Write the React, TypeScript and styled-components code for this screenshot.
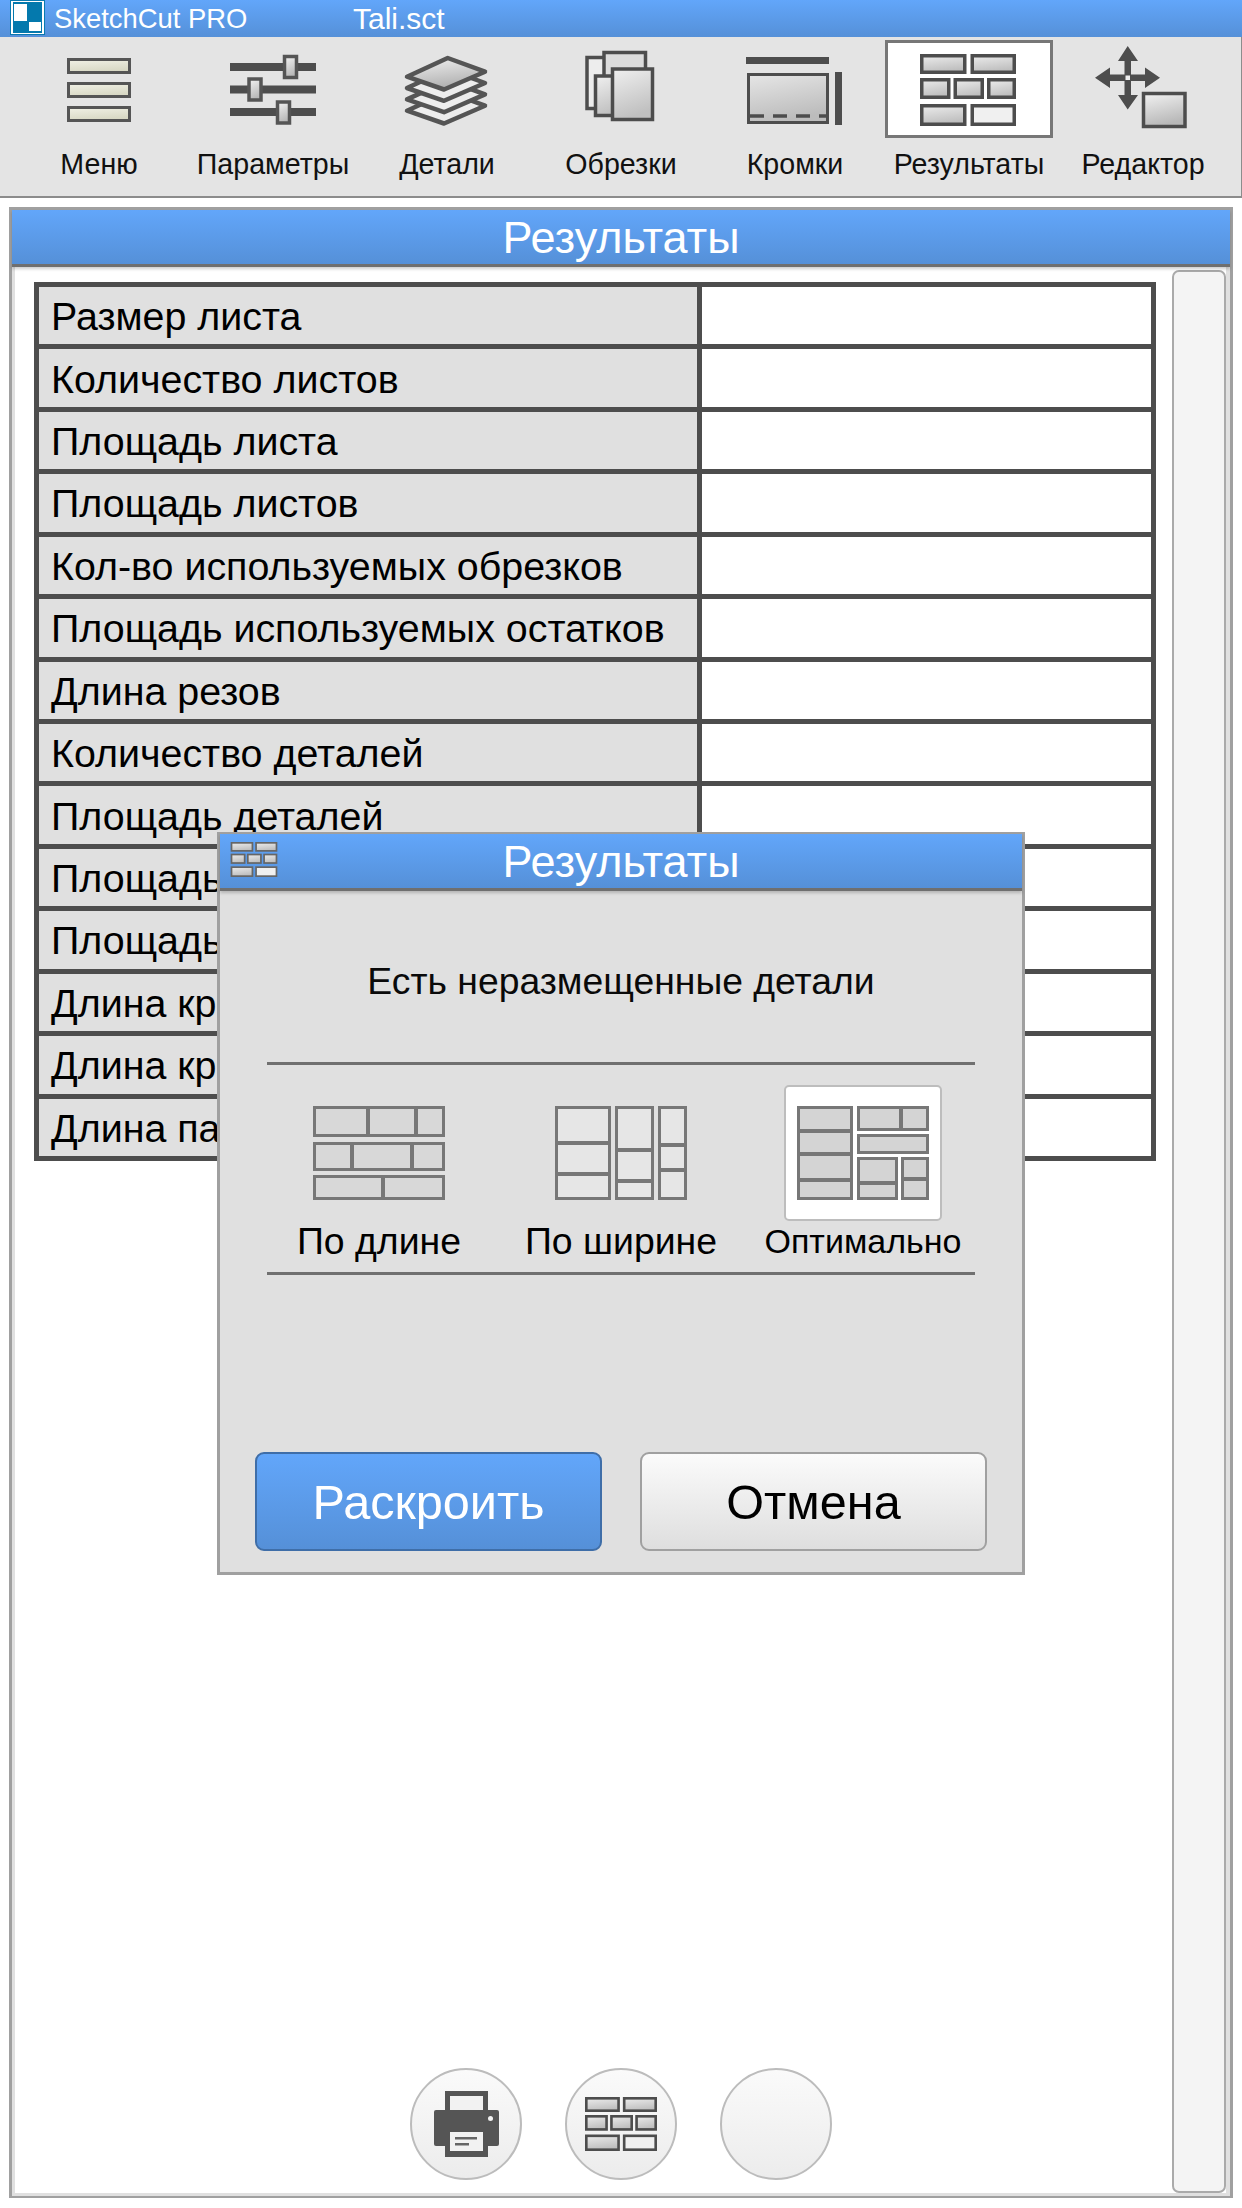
import * as React from 'react';
import styled, { createGlobalStyle } from 'styled-components';

const GlobalStyle = createGlobalStyle`
  html, body {
    margin: 0;
    padding: 0;
    background: #ffffff;
  }

  * {
    box-sizing: border-box;
  }
`;

const BLUE_BAR = 'linear-gradient(to bottom, #62a6fa 0%, #5590d8 100%)';

const Page = styled.div`
  position: relative;
  width: 1242px;
  height: 2208px;
  overflow: hidden;
  display: flex;
  flex-direction: column;
  background: #ffffff;
  font-family: 'Liberation Sans', Arial, sans-serif;
  color: #000000;
`;

const TitleBar = styled.div`
  height: 37px;
  flex: none;
  display: flex;
  align-items: center;
  background: ${BLUE_BAR};
  color: #ffffff;
  font-size: 27.4px;
`;

const Logo = styled.svg`
  width: 35px;
  height: 35px;
  margin: 0 9px 2px 10px;
  flex: none;
`;

const AppName = styled.span`
  width: 299px;
  flex: none;
`;

const FileName = styled.span`
  font-size: 30px;
`;

const Toolbar = styled.div`
  height: 161px;
  flex: none;
  display: grid;
  grid-template-columns: repeat(7, 174px);
  padding: 3px 12px 0;
  background: #e4e4e4;
  border-bottom: 2px solid #8c8c8c;
  border-right: 1px solid #8c8c8c;
`;

const ToolItem = styled.div`
  display: flex;
  flex-direction: column;
  align-items: center;
`;

const ToolIconBox = styled.div<{ $active?: boolean }>`
  width: 168px;
  height: 98px;
  background: ${(p) => (p.$active ? '#ffffff' : 'transparent')};
  outline: ${(p) => (p.$active ? '3px solid #777777' : 'none')};
  outline-offset: -3px;
`;

const ToolSvg = styled.svg`
  display: block;
  width: 168px;
  height: 98px;
`;

const ToolLabel = styled.div`
  margin-top: 11px;
  font-size: 28.6px;
  line-height: 30px;
  white-space: nowrap;
  color: #111111;
`;

const Panel = styled.div`
  flex: none;
  width: 1224px;
  height: 1991px;
  margin: 9px 0 0 9px;
  display: flex;
  flex-direction: column;
  border: 3px solid #a0a0a0;
  border-bottom-width: 2px;
`;

const BlueHeader = styled.div`
  position: relative;
  flex: none;
  height: 57px;
  display: flex;
  align-items: center;
  justify-content: center;
  padding-top: 2px;
  background: ${BLUE_BAR};
  border-bottom: 3px solid #6f6f6f;
  box-shadow: 0 2px 3px rgba(0, 0, 0, 0.2);
  color: #ffffff;
  font-size: 45px;
`;

const PanelBody = styled.div`
  flex: 1;
  min-height: 0;
  display: flex;
  gap: 16px;
  padding: 3px 0 0 19px;
  border-left: 3px solid #e0e0e0;
  border-right: 4px solid #e0e0e0;
  border-bottom: 3px solid #e0e0e0;
`;

const MainColumn = styled.div`
  width: 1122px;
  flex: none;
  display: flex;
  flex-direction: column;
  padding: 12px 0 13px;
`;

const ResultTable = styled.div`
  height: 879px;
  flex: none;
  display: grid;
  grid-template-rows: repeat(14, 1fr);
  grid-template-columns: 658px 449px;
  gap: 5px;
  padding: 5px;
  background: #4d4d4d;
`;

const LabelCell = styled.div`
  display: flex;
  align-items: center;
  padding: 2px 0 0 12px;
  background: #e0e0e0;
  font-size: 39.4px;
  white-space: nowrap;
  overflow: hidden;
`;

const ValueCell = styled.div`
  background: #ffffff;
`;

const BottomBar = styled.div`
  margin-top: auto;
  display: flex;
  gap: 43px;
  padding-left: 376px;
`;

const RoundButton = styled.div`
  width: 112px;
  height: 112px;
  display: flex;
  align-items: center;
  justify-content: center;
  border-radius: 50%;
  border: 2px solid #bcbcbc;
  background: linear-gradient(to bottom, #fafafa 0%, #ececec 100%);
`;

const Scrollbar = styled.div`
  width: 54px;
  flex: none;
  background: #f4f4f4;
  border: 2px solid #aaaaaa;
  border-radius: 7px;
`;

const Dialog = styled.div`
  position: absolute;
  left: 217px;
  top: 832px;
  width: 808px;
  height: 743px;
  display: flex;
  flex-direction: column;
  background: #e0e0e0;
  border: 3px solid #a0a0a0;
  border-top-width: 2px;
`;

const DialogIcon = styled.svg`
  position: absolute;
  left: 10px;
  top: 8px;
  width: 48px;
  height: 35px;
`;

const Message = styled.div`
  margin-top: 68px;
  height: 44px;
  line-height: 44px;
  text-align: center;
  font-size: 37.3px;
  color: #0a0a0a;
`;

const Divider = styled.div<{ $top: number }>`
  flex: none;
  height: 3px;
  margin: ${(p) => p.$top}px 47px 0;
  background: #707070;
`;

const Options = styled.div`
  display: grid;
  grid-template-columns: repeat(3, 242px);
  justify-content: center;
  padding-top: 20px;
`;

const Option = styled.div`
  display: flex;
  flex-direction: column;
  align-items: center;
`;

const OptionIconBox = styled.div<{ $active?: boolean }>`
  width: 158px;
  height: 136px;
  display: flex;
  align-items: center;
  justify-content: center;
  border-radius: 5px;
  background: ${(p) => (p.$active ? '#ffffff' : 'transparent')};
  border: 2px solid ${(p) => (p.$active ? '#bdbdbd' : 'transparent')};
`;

const OptionSvg = styled.svg`
  display: block;
  width: 132px;
  height: 94px;
`;

const OptionLabel = styled.div<{ $size: number }>`
  height: 40px;
  line-height: 40px;
  font-size: ${(p) => p.$size}px;
  white-space: nowrap;
`;

const Buttons = styled.div`
  margin-top: auto;
  display: flex;
  justify-content: center;
  gap: 38px;
  padding-bottom: 21px;
`;

const DialogButton = styled.div<{ $primary?: boolean }>`
  width: 347px;
  height: 99px;
  display: flex;
  align-items: center;
  justify-content: center;
  border-radius: 9px;
  font-size: 48.6px;
  color: ${(p) => (p.$primary ? '#ffffff' : '#000000')};
  background: ${(p) =>
    p.$primary ? BLUE_BAR : 'linear-gradient(to bottom, #fbfbfb 0%, #dedede 100%)'};
  border: 2px solid ${(p) => (p.$primary ? '#3f6ea8' : '#a0a0a0')};
`;

const ROWS = [
  'Размер листа',
  'Количество листов',
  'Площадь листа',
  'Площадь листов',
  'Кол-во используемых обрезков',
  'Площадь используемых остатков',
  'Длина резов',
  'Количество деталей',
  'Площадь деталей',
  'Площадь остатков',
  'Площадь отходов',
  'Длина кромки',
  'Длина кромки',
  'Длина пазов',
];

const DARK = '#4d4d4d';

const Shade = ({ id, from = '#f2f2f2', to = '#bdbdbd' }: { id: string; from?: string; to?: string }) => (
  <defs>
    <linearGradient id={id} x1="0" y1="0" x2="0.3" y2="1">
      <stop offset="0" stopColor={from} />
      <stop offset="1" stopColor={to} />
    </linearGradient>
  </defs>
);

const viewFor = (cx: number) => `${cx - 84} 40 168 98`;

const MenuIcon = () => (
  <ToolSvg viewBox={viewFor(99)}>
    <Shade id="menu" from="#f1f1e6" to="#d8d8c4" />
    {[59.5, 83.5, 107.5].map((y) => (
      <rect key={y} x="68.5" y={y} width="61" height="13" fill="url(#menu)" stroke="#555555" strokeWidth="3" />
    ))}
  </ToolSvg>
);

const Knob = ({ x, y }: { x: number; y: number }) => (
  <rect x={x} y={y} width="12" height="21" fill="url(#knob)" stroke="#555555" strokeWidth="3.5" />
);

const SlidersIcon = () => (
  <ToolSvg viewBox={viewFor(273)}>
    <Shade id="knob" from="#f4f4f4" to="#b8b8b8" />
    <rect x="230" y="63" width="86" height="8" fill={DARK} />
    <rect x="230" y="85.5" width="86" height="8" fill={DARK} />
    <rect x="230" y="108" width="86" height="8" fill={DARK} />
    <Knob x={284.5} y={56.5} />
    <Knob x={249} y={79} />
    <Knob x={277.5} y={102} />
  </ToolSvg>
);

const LAYER_SHAPE = (dy: number) =>
  `M447.7 ${58 + dy} L485 ${71.7 + dy} L444 ${89.5 + dy} L407 ${76.7 + dy} Z`;

const LayersIcon = () => (
  <ToolSvg viewBox={viewFor(447)}>
    <Shade id="layer" from="#f2f2f2" to="#b0b0b0" />
    {[34, 22.7, 11.3].map((dy) => (
      <path key={dy} d={LAYER_SHAPE(dy)} fill="#ededed" stroke="#555555" strokeWidth="4.5" strokeLinejoin="round" />
    ))}
    <path d={LAYER_SHAPE(0)} fill="url(#layer)" stroke="#555555" strokeWidth="4.5" strokeLinejoin="round" />
  </ToolSvg>
);

const OffcutsIcon = () => (
  <ToolSvg viewBox={viewFor(621)}>
    <Shade id="offcut" from="#f0f0f0" to="#c0c0c0" />
    <rect x="587" y="57.5" width="30" height="51" fill="#ededed" stroke={DARK} strokeWidth="3.5" />
    <rect x="604" y="52.5" width="41.5" height="40" fill="#dcdcdc" stroke={DARK} strokeWidth="3.5" />
    <rect x="595.5" y="76" width="30" height="39.5" fill="url(#offcut)" stroke={DARK} strokeWidth="3.5" />
    <rect x="612.5" y="69" width="40" height="50.5" fill="url(#offcut)" stroke={DARK} strokeWidth="3.5" />
  </ToolSvg>
);

const EdgesIcon = () => (
  <ToolSvg viewBox={viewFor(795)}>
    <Shade id="edge" from="#e6e6e6" to="#bcbcbc" />
    <rect x="746" y="57" width="83" height="7" fill={DARK} />
    <rect x="748.5" y="74.5" width="79" height="48" fill="url(#edge)" stroke={DARK} strokeWidth="3" />
    <path d="M750 116 H827" stroke={DARK} strokeWidth="3.5" strokeDasharray="14 9" fill="none" />
    <rect x="835" y="72" width="7" height="53" fill={DARK} />
  </ToolSvg>
);

const BRICK_ROWS = [
  [920, 54, 46.5, 20],
  [970.5, 54, 45.5, 20],
  [920, 78, 30.5, 21],
  [953.5, 78, 30.5, 21],
  [987, 78, 29, 21],
  [920, 104, 46.5, 22],
  [970.5, 104, 45.5, 22],
];

const Bricks = ({ id, stroke = DARK }: { id: string; stroke?: string }) => (
  <>
    <Shade id={id} from="#ececec" to="#bfbfbf" />
    {BRICK_ROWS.map(([x, y, w, h], i) => (
      <rect
        key={i}
        x={x + 1.75}
        y={y + 1.75}
        width={w - 3.5}
        height={h - 3.5}
        fill={i === BRICK_ROWS.length - 1 ? '#f0f0f0' : `url(#${id})`}
        stroke={stroke}
        strokeWidth="3.5"
      />
    ))}
  </>
);

const ResultsIcon = () => (
  <ToolSvg viewBox={viewFor(969)}>
    <Bricks id="brick-tool" />
  </ToolSvg>
);

const EditorIcon = () => (
  <ToolSvg viewBox={viewFor(1143)}>
    <Shade id="editor" from="#f2f2f2" to="#b8b8b8" />
    <path
      d="M1127.7 46 L1138 61 H1131 V74.5 H1145 V67.5 L1160 77.7 L1145 88 V81 H1131 V95 H1138 L1127.7 109.5 L1118 95 H1124.5 V81 H1110 V88 L1095 77.7 L1110 67.5 V74.5 H1124.5 V61 H1118 Z"
      fill={DARK}
    />
    <rect x="1125.5" y="75.5" width="4.5" height="4.5" fill="#ededed" />
    <rect x="1143.5" y="93.5" width="41.5" height="33" fill="url(#editor)" stroke={DARK} strokeWidth="3.5" />
  </ToolSvg>
);

const PrinterIcon = () => (
  <svg width="65" height="66" viewBox="0 0 65 66">
    <rect x="11" y="0" width="43" height="22" fill="#555555" />
    <rect x="16" y="5" width="33" height="17" fill="#f2f2f2" />
    <rect x="0" y="19" width="65" height="36" rx="2" fill="#555555" />
    <circle cx="56.5" cy="27.5" r="2.5" fill="#f2f2f2" />
    <rect x="11" y="39" width="43" height="27" fill="#555555" />
    <rect x="16" y="41" width="33" height="19" fill="#f2f2f2" />
    <rect x="21" y="46" width="22" height="2.5" fill="#666666" />
    <rect x="21" y="52" width="14" height="2.5" fill="#666666" />
  </svg>
);

type Block = [number, number, number, number];

const BlockIcon = ({ blocks, fill }: { blocks: Block[]; fill: string }) => (
  <OptionSvg viewBox="0 0 132 94">
    {blocks.map(([x, y, w, h], i) => (
      <rect key={i} x={x + 1.5} y={y + 1.5} width={w - 3} height={h - 3} fill={fill} stroke="#777777" strokeWidth="3" />
    ))}
  </OptionSvg>
);

const BY_LENGTH: Block[] = [
  [0, 0, 56, 31],
  [54, 0, 50, 31],
  [102, 0, 30, 31],
  [0, 36, 40, 29],
  [38, 36, 62, 29],
  [98, 36, 34, 29],
  [0, 69, 71, 25],
  [69, 69, 63, 25],
];

const BY_WIDTH: Block[] = [
  [0, 0, 56, 38],
  [0, 36, 56, 33],
  [0, 67, 56, 27],
  [60, 0, 39, 45],
  [60, 43, 39, 33],
  [60, 74, 39, 20],
  [103, 0, 29, 40],
  [103, 38, 29, 27],
  [103, 63, 29, 31],
];

const OPTIMAL: Block[] = [
  [0, 0, 56, 26],
  [0, 24, 56, 25],
  [0, 47, 56, 28],
  [0, 73, 56, 21],
  [60, 0, 45, 25],
  [103, 0, 29, 25],
  [60, 28, 72, 20],
  [60, 51, 41, 27],
  [60, 76, 41, 18],
  [104, 51, 28, 23],
  [104, 72, 28, 22],
];

const TOOLS = [
  { label: 'Меню', icon: <MenuIcon /> },
  { label: 'Параметры', icon: <SlidersIcon /> },
  { label: 'Детали', icon: <LayersIcon /> },
  { label: 'Обрезки', icon: <OffcutsIcon /> },
  { label: 'Кромки', icon: <EdgesIcon /> },
  { label: 'Результаты', icon: <ResultsIcon />, active: true },
  { label: 'Редактор', icon: <EditorIcon /> },
];

const App = () => {
  return (
    <Page>
      <GlobalStyle />
      <TitleBar>
        <Logo viewBox="0 0 35 35">
          <rect x="0.5" y="0.5" width="34" height="34" fill="#ffffff" stroke="#0a7ab0" strokeWidth="1" />
          <rect x="3" y="2" width="29" height="31" fill="#0479ad" />
          <rect x="4" y="4" width="13" height="17" fill="#ffffff" />
          <rect x="19" y="22" width="12" height="9" fill="#ffffff" />
        </Logo>
        <AppName>SketchCut PRO</AppName>
        <FileName>Tali.sct</FileName>
      </TitleBar>

      <Toolbar>
        {TOOLS.map((tool) => (
          <ToolItem key={tool.label}>
            <ToolIconBox $active={tool.active}>{tool.icon}</ToolIconBox>
            <ToolLabel>{tool.label}</ToolLabel>
          </ToolItem>
        ))}
      </Toolbar>

      <Panel>
        <BlueHeader>Результаты</BlueHeader>
        <PanelBody>
          <MainColumn>
            <ResultTable>
              {ROWS.map((row, i) => (
                <React.Fragment key={i}>
                  <LabelCell>{row}</LabelCell>
                  <ValueCell />
                </React.Fragment>
              ))}
            </ResultTable>
            <BottomBar>
              <RoundButton>
                <PrinterIcon />
              </RoundButton>
              <RoundButton>
                <svg width="72" height="54" viewBox="920 54 96 72">
                  <Bricks id="brick-round" />
                </svg>
              </RoundButton>
              <RoundButton />
            </BottomBar>
          </MainColumn>
          <Scrollbar />
        </PanelBody>
      </Panel>

      <Dialog>
        <BlueHeader>
          <DialogIcon viewBox="920 54 96 72">
            <Bricks id="brick-dialog" stroke="#666666" />
          </DialogIcon>
          Результаты
        </BlueHeader>
        <Message>Есть неразмещенные детали</Message>
        <Divider $top={59} />
        <Options>
          <Option>
            <OptionIconBox>
              <BlockIcon blocks={BY_LENGTH} fill="#d8d8d8" />
            </OptionIconBox>
            <OptionLabel $size={37.4}>По длине</OptionLabel>
          </Option>
          <Option>
            <OptionIconBox>
              <BlockIcon blocks={BY_WIDTH} fill="#e6e6e6" />
            </OptionIconBox>
            <OptionLabel $size={37.4}>По ширине</OptionLabel>
          </Option>
          <Option>
            <OptionIconBox $active>
              <BlockIcon blocks={OPTIMAL} fill="#d4d4d4" />
            </OptionIconBox>
            <OptionLabel $size={34}>Оптимально</OptionLabel>
          </Option>
        </Options>
        <Divider $top={11} />
        <Buttons>
          <DialogButton $primary>Раскроить</DialogButton>
          <DialogButton>Отмена</DialogButton>
        </Buttons>
      </Dialog>
    </Page>
  );
};

export default App;
